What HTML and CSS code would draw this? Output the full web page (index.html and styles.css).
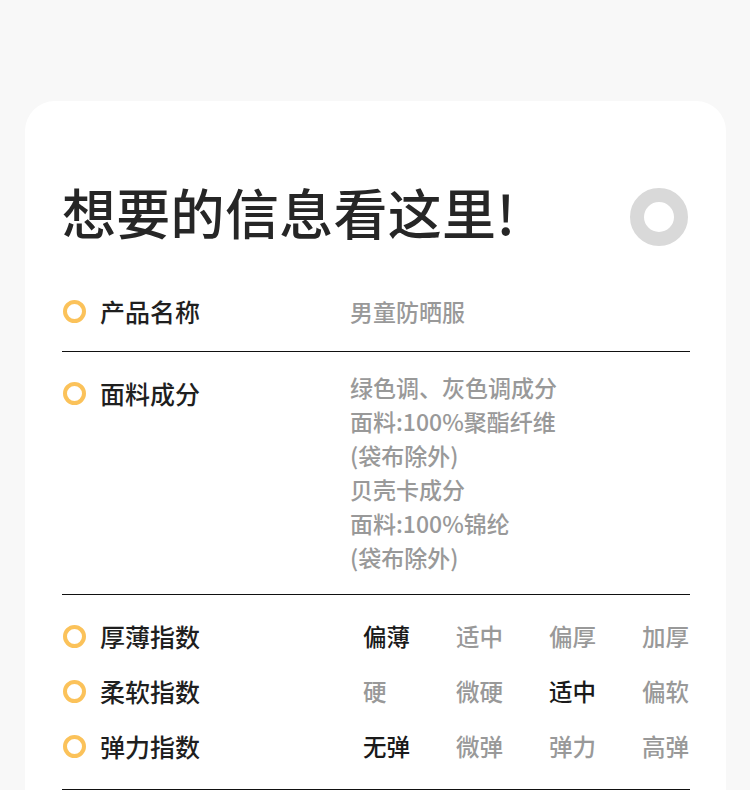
FILE: index.html
```html
<!DOCTYPE html>
<html lang="zh">
<head>
<meta charset="utf-8">
<title>想要的信息看这里</title>
<link rel="stylesheet" href="styles.css">
</head>
<body>
<div class="card">
  <div class="head">
    <h1 class="title">想要的信息看这里!</h1>
    <span class="ring"></span>
  </div>
  <div class="row row-center">
    <div class="label"><span class="dot"></span>产品名称</div>
    <div class="value">男童防晒服</div>
  </div>
  <div class="row row-multi">
    <div class="label label-drop"><span class="dot"></span>面料成分</div>
    <div class="value">绿色调、灰色调成分<br>面料:100%聚酯纤维<br>(袋布除外)<br>贝壳卡成分<br>面料:100%锦纶<br>(袋布除外)</div>
  </div>
  <div class="row row-index">
    <div class="idx">
      <div class="label"><span class="dot"></span>厚薄指数</div>
      <div class="opts"><span class="on">偏薄</span><span>适中</span><span>偏厚</span><span>加厚</span></div>
    </div>
    <div class="idx">
      <div class="label"><span class="dot"></span>柔软指数</div>
      <div class="opts"><span>硬</span><span>微硬</span><span class="on">适中</span><span>偏软</span></div>
    </div>
    <div class="idx">
      <div class="label"><span class="dot"></span>弹力指数</div>
      <div class="opts"><span class="on">无弹</span><span>微弹</span><span>弹力</span><span>高弹</span></div>
    </div>
  </div>
</div>
</body>
</html>
```
FILE: styles.css
```css
html, body {
  margin: 0;
  padding: 0;
  background: #f8f8f8;
  font-family: "Noto Sans CJK SC", "Noto Sans", sans-serif;
}
.card {
  margin: 101px 24px 0 25px;
  padding: 84px 36px 0 37px;
  background: #fff;
  border-radius: 30px 30px 0 0;
  min-height: 800px;
}
.head {
  display: flex;
  justify-content: space-between;
  align-items: center;
  height: 54px;
}
.title {
  margin: 0;
  font-size: 54px;
  line-height: 54px;
  font-weight: 500;
  color: #262626;
  letter-spacing: 0.3px;
}
.ring {
  box-sizing: border-box;
  width: 58px;
  height: 58px;
  border-radius: 50%;
  border: 14.5px solid #d9d9d9;
  margin: 10px 2px 0 0;
}
.row {
  display: flex;
  border-bottom: 1px solid #111;
}
.row-center {
  align-items: center;
  padding: 55px 0 23px;
}
.row-multi {
  align-items: flex-start;
  padding: 18px 0 20px;
}
.row-index {
  flex-direction: column;
  gap: 21px;
  padding: 24px 0 26px;
}
.label {
  width: 288px;
  flex: none;
  display: flex;
  align-items: center;
  font-size: 25px;
  line-height: 34px;
  font-weight: 500;
  color: #1f1f1f;
}
.label-drop {
  margin-top: 6px;
}
.dot {
  box-sizing: border-box;
  width: 23px;
  height: 23px;
  border-radius: 50%;
  border: 4px solid #fbc25a;
  margin: 0 14px 0 1px;
  flex: none;
}
.value {
  font-size: 23px;
  line-height: 34px;
  font-weight: 500;
  color: #999;
}
.idx {
  display: flex;
  align-items: center;
}
.opts {
  display: grid;
  grid-template-columns: repeat(4, 93px);
  padding-left: 13px;
  font-size: 23.5px;
  line-height: 34px;
  font-weight: 500;
  color: #999;
}
.opts .on {
  color: #1a1a1a;
}
```
